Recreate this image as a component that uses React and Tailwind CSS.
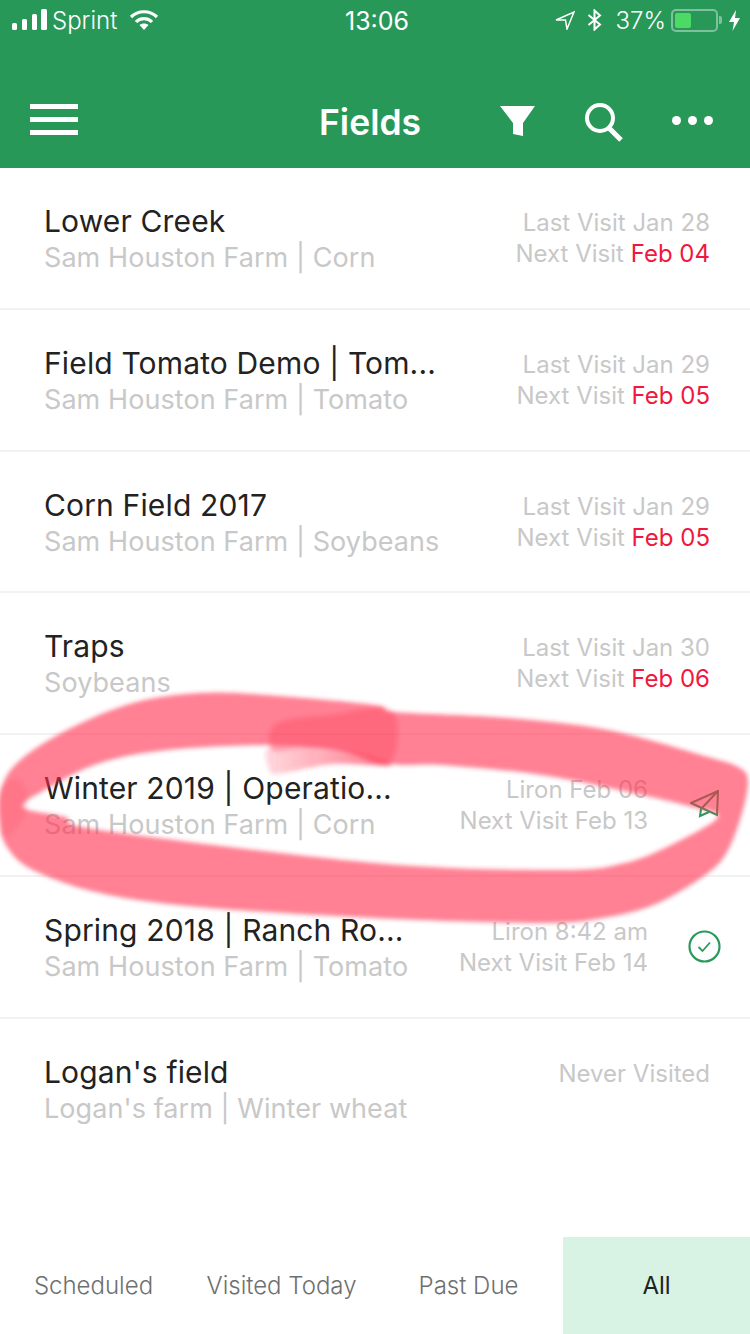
import React from "react";

const fields = [
  { title: "Lower Creek", sub: "Sam Houston Farm | Corn", last: "Last Visit Jan 28", next: "Feb 04", late: true },
  { title: "Field Tomato Demo | Tom...", sub: "Sam Houston Farm | Tomato", last: "Last Visit Jan 29", next: "Feb 05", late: true },
  { title: "Corn Field 2017", sub: "Sam Houston Farm | Soybeans", last: "Last Visit Jan 29", next: "Feb 05", late: true },
  { title: "Traps", sub: "Soybeans", last: "Last Visit Jan 30", next: "Feb 06", late: true },
  { title: "Winter 2019 | Operatio...", sub: "Sam Houston Farm | Corn", last: "Liron Feb 06", next: "Feb 13", icon: "sent" },
  { title: "Spring 2018 | Ranch Ro...", sub: "Sam Houston Farm | Tomato", last: "Liron 8:42 am", next: "Feb 14", icon: "done" },
  { title: "Logan's field", sub: "Logan's farm | Winter wheat", last: "Never Visited" },
];

const tabs = ["Scheduled", "Visited Today", "Past Due", "All"];

// smooth closed curve through the hand-measured points of the marker stroke
const smooth = (pts) => {
  const n = pts.length;
  let d = `M${pts[0][0]} ${pts[0][1]}`;
  for (let i = 0; i < n; i++) {
    const p0 = pts[(i - 1 + n) % n];
    const p1 = pts[i];
    const p2 = pts[(i + 1) % n];
    const p3 = pts[(i + 2) % n];
    const c1 = [p1[0] + (p2[0] - p0[0]) / 6, p1[1] + (p2[1] - p0[1]) / 6];
    const c2 = [p2[0] - (p3[0] - p1[0]) / 6, p2[1] - (p3[1] - p1[1]) / 6];
    d += `C${c1[0]} ${c1[1]} ${c2[0]} ${c2[1]} ${p2[0]} ${p2[1]}`;
  }
  return d + "Z";
};

const outer = [
  [0, 793], [17, 763], [67, 730], [133, 703], [200, 693], [267, 695], [375, 705], [395, 712], [508, 718], [608, 730],
  [708, 757], [738, 767], [748, 780], [742, 813], [728, 850], [708, 873], [658, 903], [608, 917], [542, 923],
  [375, 918], [200, 907], [100, 893], [33, 870], [7, 847], [0, 823],
];
const inner = [
  [23, 807], [50, 787], [100, 763], [167, 750], [267, 745], [330, 748], [392, 764], [442, 765], [542, 775], [642, 795],
  [692, 807], [718, 817], [675, 843], [625, 863], [558, 870], [375, 863], [100, 830], [65, 817],
];
const overlap = [
  [276, 724], [330, 715], [392, 711], [389, 764], [340, 750], [300, 748], [272, 750],
];
const tail = [
  [271, 746], [330, 747], [392, 765], [333, 764], [283, 773], [270, 771],
];
const leftOverlap = [
  [0, 790], [20, 780], [28, 806], [15, 830], [0, 835],
];

const MarkerCircle = () => (
  <svg className="absolute left-0 top-0 pointer-events-none" width="750" height="1334" viewBox="0 0 750 1334">
    <defs>
      <filter id="soft" x="-5%" y="-20%" width="110%" height="140%">
        <feGaussianBlur stdDeviation="2" />
      </filter>
      <linearGradient id="tailFade" x1="270" x2="392" y1="0" y2="0" gradientUnits="userSpaceOnUse">
        <stop offset="0" stopColor="#ff2d4b" stopOpacity="0.2" />
        <stop offset="1" stopColor="#ff2d4b" stopOpacity="0.65" />
      </linearGradient>
    </defs>
    <g filter="url(#soft)">
      <path d={smooth(outer) + smooth(inner)} fillRule="evenodd" fill="#ff2d4b" fillOpacity="0.6" />
      <path d={smooth(overlap)} fill="#ff2d4b" fillOpacity="0.3" />
      <path d={smooth(tail)} fill="url(#tailFade)" />
      <path d={smooth(leftOverlap)} fill="#ff2d4b" fillOpacity="0.12" />
    </g>
  </svg>
);

const StatusBar = () => (
  <div className="h-[40px] flex items-center justify-between pl-[12px] pr-[9px] text-white text-[24px] leading-none relative">
    <div className="flex items-center">
      <svg width="35" height="22" viewBox="0 0 35 22" fill="#fff">
        <rect x="0" y="14" width="5" height="7" rx="1.5" />
        <rect x="10" y="10" width="5" height="11" rx="1.5" />
        <rect x="20" y="5" width="5" height="16" rx="1.5" />
        <rect x="28" y="0" width="6" height="21" rx="1.5" transform="translate(1 0)" />
      </svg>
      <span className="ml-[5px] mt-[2px] font-light">Sprint</span>
      <svg className="ml-[12px]" width="30" height="22" viewBox="0 0 30 22" fill="none" stroke="#fff" strokeWidth="3.2">
        <path d="M2 8 C9 1 21 1 28 8" />
        <path d="M7 13 C11 8.500 19 8.500 23 13" />
        <path d="M15 21 L10.500 16 C13 14 17 14 19.500 16 Z" fill="#fff" stroke="none" />
      </svg>
    </div>
    <span className="absolute left-[345px] top-[9px] text-[25px] font-normal">13:06</span>
    <div className="flex items-center">
      <svg width="20" height="20" viewBox="0 0 20 20" fill="none" stroke="#fff" strokeWidth="1.5">
        <path d="M1 10 L19 2 L12 19 L10.500 10 Z" />
      </svg>
      <svg className="ml-[12px]" width="15" height="22" viewBox="0 0 15 22" fill="none" stroke="#fff" strokeWidth="2">
        <path d="M1.500 6 L13 15.500 L7.500 20.500 L7.500 1.500 L13 6.500 L1.500 16" />
      </svg>
      <span className="ml-[14px] mt-[2px] font-light">37%</span>
      <div className="ml-[5px] w-[47px] h-[23px] rounded-[5px] border-2 border-white/40 p-[2px]">
        <div className="w-[16px] h-full bg-[#4cd964] rounded-[2px]" />
      </div>
      <div className="w-[3px] h-[8px] bg-white/40 rounded-r-[2px] ml-[1px]" />
      <svg className="ml-[6px]" width="13" height="21" viewBox="0 0 13 21" fill="#fff">
        <path d="M8 0 L1 12 L6 12 L4.500 21 L12 8 L7 8 Z" />
      </svg>
    </div>
  </div>
);

const Header = () => (
  <div className="h-[128px] flex items-center relative text-white">
    <div className="ml-[30px] w-[48px] flex flex-col gap-[8px] mt-[30px]">
      <div className="h-[5px] bg-white" />
      <div className="h-[5px] bg-white" />
      <div className="h-[5px] bg-white" />
    </div>
    <span className="ml-[241px] mt-[38px] text-[35.500px] leading-none font-semibold">Fields</span>
    <svg className="absolute left-[500px] top-[66px]" width="36" height="30" viewBox="0 0 36 30" fill="#fff">
      <path d="M0 0 H35 L23 17 V30 L13 28 V17 Z" />
    </svg>
    <svg className="absolute left-[584px] top-[62px]" width="40" height="40" viewBox="0 0 40 40" fill="none" stroke="#fff">
      <circle cx="16" cy="16" r="13" strokeWidth="4" />
      <path d="M25 26 L37 38" strokeWidth="5" />
    </svg>
    <div className="absolute left-[672px] top-[76px] flex gap-[7px]">
      <div className="w-[9px] h-[9px] rounded-full bg-white" />
      <div className="w-[9px] h-[9px] rounded-full bg-white" />
      <div className="w-[9px] h-[9px] rounded-full bg-white" />
    </div>
  </div>
);

const Row = ({ field, isLast }) => (
  <div className={`h-[141.83px] flex pl-[44px] relative ${isLast ? "" : "border-b-2 border-[#f2f2f2]"}`}>
    <div className="flex-1 min-w-0 pt-[35px]">
      <div className="text-[30px] leading-[36px] tracking-[0.15px] text-[#222222] whitespace-nowrap">{field.title}</div>
      <div className="text-[27px] leading-[37px] tracking-[0.07px] text-[#c8c8c8] whitespace-nowrap">{field.sub}</div>
    </div>
    <div className={`pt-[39px] text-right text-[24px] leading-[31px] text-[#c8c8c8] whitespace-nowrap ${field.icon ? "pr-[102px]" : "pr-[40px]"}`}>
      <div>{field.last}</div>
      {field.next && (
        <div>
          Next Visit <span className={field.late ? "text-[#f0183c]" : ""}>{field.next}</span>
        </div>
      )}
    </div>
    {field.icon === "sent" && (
      <svg className="absolute left-[690px] top-[55px]" width="31" height="30" viewBox="0 0 31 30" fill="none" stroke="#2a9a5b" strokeWidth="2">
        <path d="M1 13 L28 1 L27 25 Z" />
        <path d="M28 1 L11 19 L10 26 L19 22" />
      </svg>
    )}
    {field.icon === "done" && (
      <svg className="absolute left-[688px] top-[53px]" width="33" height="33" viewBox="0 0 33 33" fill="none" stroke="#2a9a5b">
        <circle cx="16.500" cy="16.500" r="15" strokeWidth="2.200" />
        <path d="M10.500 17 L14.500 21 L22 12.500" strokeWidth="1.800" />
      </svg>
    )}
  </div>
);

const TabBar = () => (
  <div className="h-[97px] flex text-[24px] font-light">
    {tabs.map((tab) => (
      <div
        key={tab}
        className={
          tab === "All"
            ? "w-[187px] bg-[#d8f3e4] text-[#222222] font-normal flex items-center justify-center"
            : tab === "Past Due"
            ? "w-[187px] pr-[2px] text-[#6f6f6f] flex items-center justify-center"
            : tab === "Visited Today"
            ? "w-[189px] text-[#6f6f6f] flex items-center justify-center"
            : "w-[187px] text-[#6f6f6f] flex items-center justify-center"
        }
      >
        {tab}
      </div>
    ))}
  </div>
);

export default function App() {
  return (
    <div className="relative w-[750px] h-[1334px] bg-white flex flex-col overflow-hidden font-['Inter','Noto_Sans',sans-serif]">
      <div className="bg-[#289859]">
        <StatusBar />
        <Header />
      </div>
      <div className="flex-1">
        {fields.map((field, i) => (
          <Row key={field.title} field={field} isLast={i === fields.length - 1} />
        ))}
      </div>
      <TabBar />
      <MarkerCircle />
    </div>
  );
}
